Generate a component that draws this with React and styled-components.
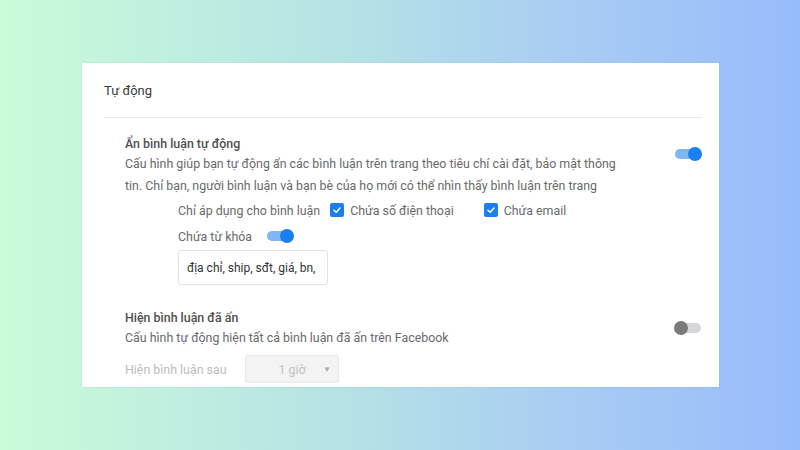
import React from "react"
import styled, { createGlobalStyle } from "styled-components"

const GlobalStyle = createGlobalStyle`
  html, body {
    margin: 0;
    padding: 0;
  }
  body {
    width: 800px;
    height: 450px;
    overflow: hidden;
    font-family: Roboto, "Noto Sans", sans-serif;
    background: linear-gradient(90deg, #c9fcd8 0%, #b4e1e6 45%, #a9cdf2 70%, #97bcfb 100%);
  }
`

const Page = styled.div`
  padding: 63px 0 0 82px;
`

const Card = styled.div`
  width: 637px;
  height: 324px;
  box-sizing: border-box;
  background: #fff;
  padding: 0 17px 0 22px;
  box-shadow: 0 0 2px rgba(0, 0, 0, 0.08);
`

const Header = styled.div`
  height: 54px;
  display: flex;
  align-items: center;
  font-size: 13px;
  color: #3a3a3a;
  border-bottom: 1px solid #e8e8e8;
`

const Section = styled.div`
  display: flex;
  justify-content: space-between;
  padding-left: 21px;
  margin-top: ${(p) => p.$top}px;
`

const Content = styled.div`
  display: flex;
  flex-direction: column;
`

const Title = styled.div`
  font-size: 12.4px;
  line-height: 18px;
  font-weight: 500;
  color: #505050;
`

const Desc = styled.div`
  font-size: 12.4px;
  line-height: 22px;
  color: #6a6a6a;
  width: 500px;
`

const Options = styled.div`
  padding-left: 53px;
  display: flex;
  flex-direction: column;
`

const OptRow = styled.div`
  display: flex;
  align-items: center;
  height: 22px;
  margin-top: ${(p) => p.$top || 0}px;
  font-size: 12.4px;
  color: #6a6a6a;
`

const Check = styled.span`
  width: 14px;
  height: 14px;
  border-radius: 2px;
  background: #1a7ff0;
  display: inline-flex;
  align-items: center;
  justify-content: center;
  margin: 0 6px 0 ${(p) => p.$gap}px;
`

const Toggle = styled.span`
  position: relative;
  display: inline-block;
  width: 28px;
  height: 14px;
  margin-left: ${(p) => p.$left || 0}px;
  margin-top: ${(p) => p.$top || 0}px;
  flex-shrink: 0;

  &::before {
    content: "";
    position: absolute;
    left: 1px;
    right: 1px;
    top: 2px;
    height: 10px;
    border-radius: 5px;
    background: ${(p) => (p.$on ? "#7fb6f5" : "#d4d6da")};
  }

  &::after {
    content: "";
    position: absolute;
    top: 0;
    ${(p) => (p.$on ? "right: 0;" : "left: 0;")}
    width: 14px;
    height: 14px;
    border-radius: 50%;
    background: ${(p) => (p.$on ? "#1a7ff0" : "#7a7a7a")};
  }
`

const Input = styled.div`
  width: 150px;
  height: 35px;
  box-sizing: border-box;
  margin-top: 3px;
  border: 1px solid #e2e2e2;
  border-radius: 3px;
  padding-left: 8px;
  display: flex;
  align-items: center;
  font-size: 12px;
  color: #333;
`

const DelayRow = styled.div`
  display: flex;
  align-items: center;
  margin-top: 6px;
  font-size: 12.4px;
  color: #bdbdbd;
`

const DelayLabel = styled.span`
  width: 120px;
`

const Select = styled.div`
  width: 94px;
  height: 28px;
  box-sizing: border-box;
  background: #f3f3f3;
  border: 1px solid #e8e8e8;
  border-radius: 3px;
  display: flex;
  align-items: center;
  justify-content: center;
  position: relative;
  color: #c2c2c2;

  span {
    position: absolute;
    right: 7px;
    font-size: 8px;
    color: #aaa;
  }
`

const Tick = () => (
  <svg width="10" height="10" viewBox="0 0 10 10">
    <path d="M2 5.2 L4.2 7.3 L8 3" fill="none" stroke="#fff" strokeWidth="1.5" strokeLinecap="round" strokeLinejoin="round" />
  </svg>
)

const App = () => {
  return (
    <Page>
      <GlobalStyle />
      <Card>
        <Header>Tự động</Header>

        <Section $top={17}>
          <Content>
            <Title>Ẩn bình luận tự động</Title>
            <Desc>
              Cấu hình giúp bạn tự động ẩn các bình luận trên trang theo tiêu chí cài đặt, bảo mật thông tin. Chỉ bạn, người bình luận và bạn bè của họ mới có thể nhìn thấy bình luận trên trang
            </Desc>
            <Options>
              <OptRow $top={2}>
                Chỉ áp dụng cho bình luận
                <Check $gap={10}><Tick /></Check>
                Chứa số điện thoại
                <Check $gap={30}><Tick /></Check>
                Chứa email
              </OptRow>
              <OptRow $top={4}>
                Chứa từ khóa
                <Toggle $on $left={14} />
              </OptRow>
              <Input>địa chỉ, ship, sđt, giá, bn,</Input>
            </Options>
          </Content>
          <Toggle $on $top={12} />
        </Section>

        <Section $top={24}>
          <Content>
            <Title>Hiện bình luận đã ấn</Title>
            <Desc>Cấu hình tự động hiện tất cả bình luận đã ấn trên Facebook</Desc>
            <DelayRow>
              <DelayLabel>Hiện bình luận sau</DelayLabel>
              <Select>
                1 giờ
                <span>▼</span>
              </Select>
            </DelayRow>
          </Content>
          <Toggle $top={12} />
        </Section>
      </Card>
    </Page>
  )
}

export default App
